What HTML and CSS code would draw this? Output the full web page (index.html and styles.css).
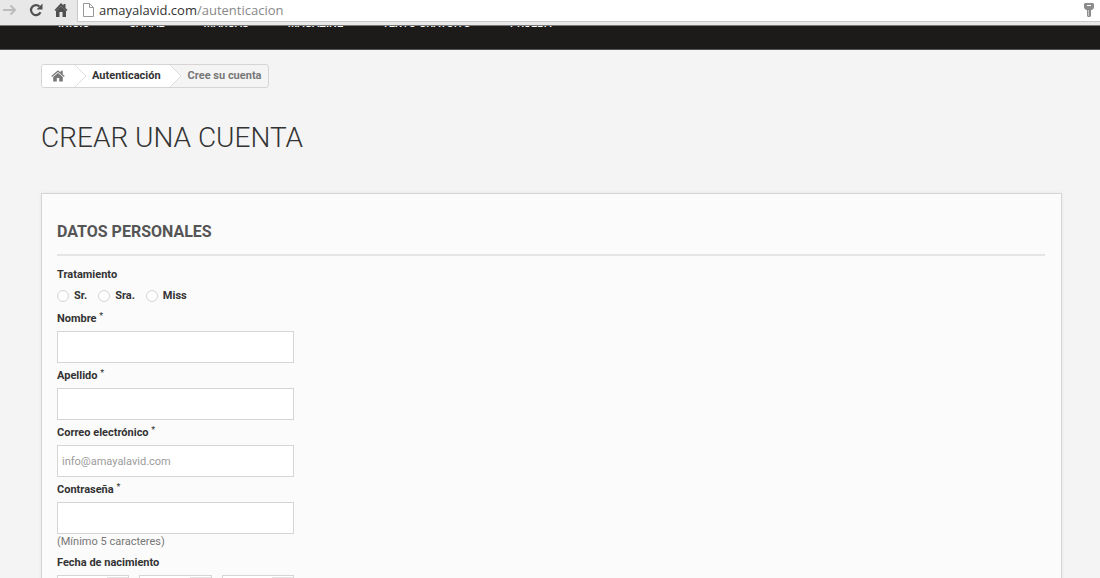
FILE: index.html
```
<!DOCTYPE html>
<html lang="es">
<head>
    <meta charset="UTF-8">
    <meta name="viewport" content="width=device-width, initial-scale=1.0">
    <title>Crear una cuenta</title>
    <link rel="stylesheet" href="styles.css">
</head>
<body>
    <header class="toolbar">
        <div class="toolbar-buttons">
            <button type="button" class="tool" aria-label="Adelante">
                <svg width="16" height="16" viewBox="0 0 16 16"><path d="M1 8h12M8.500 3.500L13 8l-4.500 4.500" fill="none" stroke="#bcbcbc" stroke-width="2"/></svg>
            </button>
            <button type="button" class="tool" aria-label="Recargar">
                <svg width="16" height="16" viewBox="0 0 16 16"><path d="M12.500 10.300A5 5 0 1 1 11.500 4.500" fill="none" stroke="#505050" stroke-width="2.200"/><path d="M14.500 1.500v6h-6z" fill="#505050"/></svg>
            </button>
            <button type="button" class="tool" aria-label="Inicio">
                <svg width="16" height="16" viewBox="0 0 16 16"><path d="M7 1L.5 8l1 1L7 4l5.500 5 1-1-2-2V2h-2v1.500z" fill="#505050"/><path d="M2 8.500L7 4l5 4.500V15H8.500v-5h-3v5H2z" fill="#505050"/></svg>
            </button>
        </div>
        <div class="address">
            <svg width="11" height="14" viewBox="0 0 11 14"><path d="M.5.5h6l4 4v9H.5z" fill="#fff" stroke="#999"/><path d="M6.500.5v4h4" fill="none" stroke="#999"/></svg>
            <span class="url">amayalavid.com<span class="url-path">/autenticacion</span></span>
            <svg class="key" width="10" height="14" viewBox="0 0 10 14"><path d="M1 0h8l1 1v4L8 7H7v6l-1 1H4l-1-1V7H2L0 5V1z" fill="#8c8c8c"/><path d="M3 2h4v1H3z" fill="#fff"/><path d="M4.500 7v6" stroke="#c4c4c4"/></svg>
        </div>
    </header>

    <nav class="menu">
        <a href="#">INICIO</a>
        <a href="#">CANAL</a>
        <a href="#">MARCAS</a>
        <a href="#">MAGAZINE</a>
        <a href="#">TEXTO GRATUITO</a>
        <a href="#">PRUEBA</a>
    </nav>

    <main class="container">
        <div class="breadcrumb">
            <a href="#" class="crumb crumb-home" aria-label="Inicio">
                <svg width="14" height="12" viewBox="0 0 14 12"><path d="M7 .3L.3 6l.8 1L7 2l5.900 5 .8-1-2-1.700V.8h-2v1.800z" fill="#777"/><path d="M2.200 7L7 3l4.800 4v4.500H8.200V8H5.800v3.500H2.200z" fill="#777"/></svg>
            </a>
            <svg class="arrow" width="12" height="22" viewBox="0 0 12 22"><path d="M0 0l11 11L0 22z" fill="#fff"/><path d="M0 0l11 11L0 22" fill="none" stroke="#dedede"/></svg>
            <a href="#" class="crumb">Autenticación</a>
            <svg class="arrow" width="12" height="22" viewBox="0 0 12 22"><path d="M0 0l11 11L0 22z" fill="#fff"/><path d="M0 0l11 11L0 22" fill="none" stroke="#dedede"/></svg>
            <span class="crumb crumb-current">Cree su cuenta</span>
        </div>

        <h1 class="title">CREAR UNA CUENTA</h1>

        <form class="card">
            <h2 class="subtitle">DATOS PERSONALES</h2>

            <fieldset class="gender">
                <legend>Tratamiento</legend>
                <div class="radios">
                    <label><input type="radio" name="gender" value="1">Sr.</label>
                    <label><input type="radio" name="gender" value="2">Sra.</label>
                    <label><input type="radio" name="gender" value="3">Miss</label>
                </div>
            </fieldset>

            <div class="form-group">
                <label for="firstname">Nombre <sup>*</sup></label>
                <input type="text" class="input" id="firstname">
            </div>
            <div class="form-group">
                <label for="lastname">Apellido <sup>*</sup></label>
                <input type="text" class="input" id="lastname">
            </div>
            <div class="form-group">
                <label for="email">Correo electrónico <sup>*</sup></label>
                <input type="email" class="input" id="email" value="info@amayalavid.com">
            </div>
            <div class="form-group">
                <label for="password">Contraseña <sup>*</sup></label>
                <input type="password" class="input" id="password">
                <span class="hint">(Mínimo 5 caracteres)</span>
            </div>
            <div class="form-group">
                <label for="days">Fecha de nacimiento</label>
                <div class="dates">
                    <select id="days"><option>-</option></select>
                    <select id="months" aria-label="Mes"><option>-</option></select>
                    <select id="years" aria-label="Año"><option>-</option></select>
                </div>
            </div>
        </form>
    </main>
</body>
</html>
```
FILE: styles.css
```
* {
    margin: 0;
    padding: 0;
    box-sizing: border-box;
}

body {
    background-color: #f4f4f4;
    color: #333;
    font-family: Roboto, sans-serif;
    font-size: 11px;
    line-height: 15px;
}

a {
    color: inherit;
    text-decoration: none;
}

svg {
    display: block;
    flex: none;
}

/* Barra del navegador */
.toolbar {
    display: flex;
    height: 26px;
    background: #e8e8e8;
    border-bottom: 1px solid #777;
}

.toolbar-buttons {
    display: flex;
    gap: 10px;
    width: 77px;
    padding: 2px 0 0 2px;
}

.tool {
    width: 16px;
    height: 16px;
    border: none;
    background: none;
}

.address {
    display: flex;
    flex: 1;
    align-items: center;
    gap: 5px;
    height: 22px;
    padding: 0 6px 2px 5px;
    background: white;
    border: 1px solid #c8c8c8;
    border-width: 0 0 1px 1px;
    border-bottom-left-radius: 2px;
}

.url {
    color: #333;
    font-family: "Open Sans", sans-serif;
    font-size: 13px;
    line-height: 18px;
}

.url-path {
    color: #888;
}

.key {
    margin-left: auto;
}

/* Menu principal, queda por debajo de la barra */
.menu {
    display: flex;
    gap: 39px;
    height: 24px;
    padding-left: 58px;
    overflow: hidden;
    background: #1c1b19;
    border-bottom: 1px solid #555;
    color: white;
    font-weight: 500;
}

.menu a {
    margin-top: -10px;
}

.container {
    padding: 14px 38px 0 41px;
}

.breadcrumb {
    display: inline-flex;
    align-items: center;
    height: 24px;
    border: 1px solid #d6d4d4;
    border-radius: 3px;
    overflow: hidden;
    font-weight: 700;
    line-height: 22px;
    vertical-align: top;
}

.crumb {
    padding: 0 9px 0 5px;
    background: white;
}

.crumb-home {
    display: flex;
    align-items: center;
    height: 22px;
    padding: 0 10px 0 9px;
}

.arrow {
    position: relative;
}

.arrow + .crumb {
    margin-left: -12px;
    padding-left: 17px;
}

.arrow + .crumb-current {
    padding-right: 7px;
    padding-left: 18px;
    background: none;
    color: #777;
}

.title {
    margin-top: 30px;
    font-size: 28px;
    font-weight: 300;
    line-height: 40px;
}

.card {
    margin-top: 35px;
    padding: 26px 16px 40px 15px;
    background: #fbfbfb;
    border: 1px solid #d6d4d4;
    box-shadow: 0 0 4px rgba(0, 0, 0, 0.06);
}

.subtitle {
    padding-bottom: 10px;
    margin-bottom: 11px;
    border-bottom: 2px solid #e5e5e5;
    color: #555;
    font-size: 16px;
    font-weight: 700;
    line-height: 24px;
}

.gender {
    border: none;
    margin-bottom: 8px;
}

.gender legend,
label {
    font-weight: 700;
}

.radios {
    display: flex;
    gap: 11px;
    padding-top: 6px;
}

.radios label {
    display: flex;
    align-items: center;
    gap: 5px;
}

.radios input {
    appearance: none;
    width: 12px;
    height: 12px;
    background: white;
    border: 1px solid #d6d4d4;
    border-radius: 50%;
}

.radios input:checked {
    background: #777;
}

.form-group {
    margin-bottom: 5px;
}

.form-group label {
    display: block;
    margin-bottom: 5px;
}

sup {
    font-weight: 400;
    font-size: 9px;
    line-height: 0;
    vertical-align: 3px;
}

.input {
    display: block;
    width: 100%;
    max-width: 237px;
    height: 32px;
    padding: 0 4px;
    background: white;
    border: 1px solid #d6d4d4;
    color: #9c9b9b;
    font-family: inherit;
    font-size: 11px;
}

.hint {
    display: block;
    padding-bottom: 1px;
    color: #777;
}

.dates {
    display: flex;
    gap: 10px;
    max-width: 237px;
}

.dates select {
    appearance: none;
    flex: 1;
    width: 0;
    height: 24px;
    padding: 0 5px;
    background: linear-gradient(#e2e2e2, #e2e2e2) right bottom / 21px 21px no-repeat white;
    border: 1px solid #d6d4d4;
    color: #777;
    font-family: inherit;
    font-size: 11px;
}
```
